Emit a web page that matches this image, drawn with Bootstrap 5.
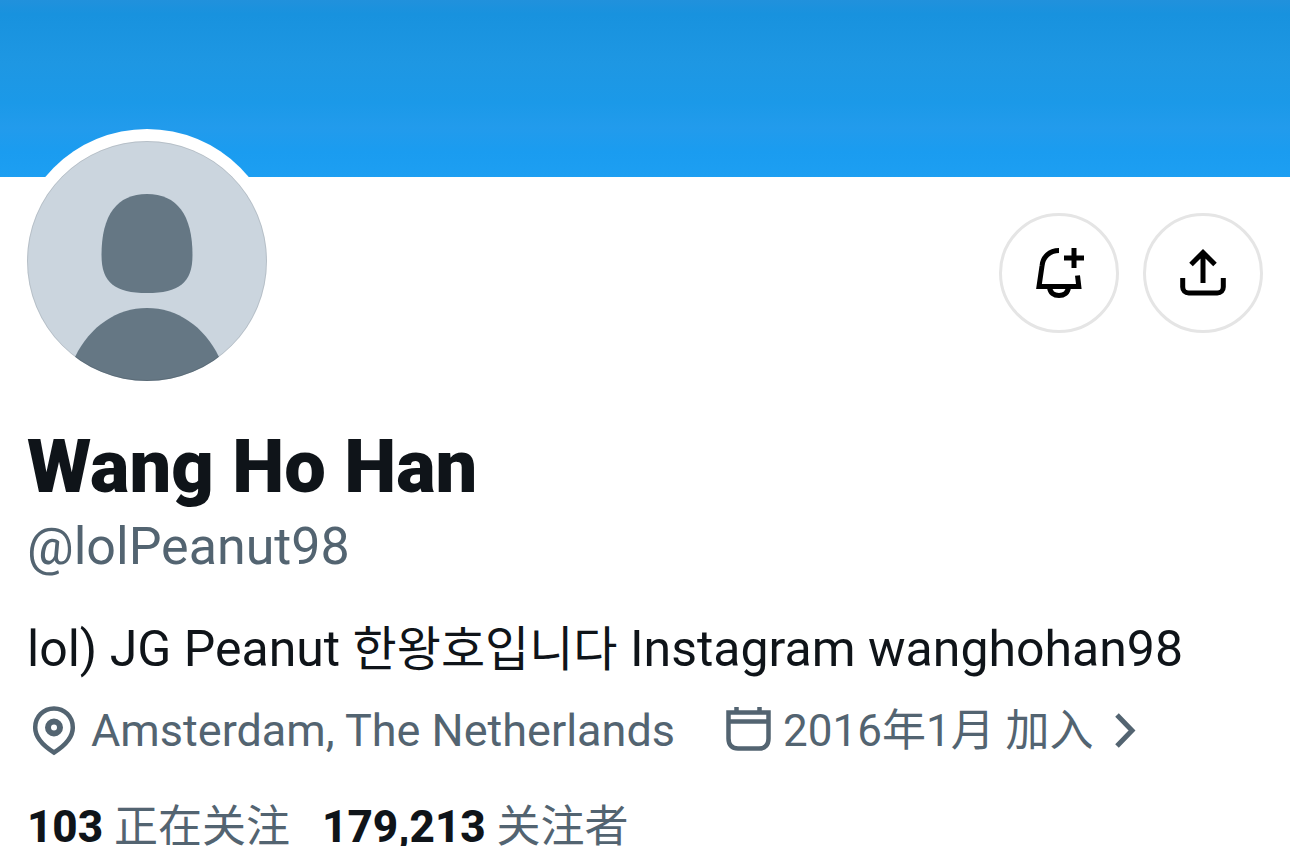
<!DOCTYPE html>
<html lang="zh-CN">
<head>
<meta charset="utf-8">
<meta name="viewport" content="width=device-width, initial-scale=1">
<title>Wang Ho Han (@lolPeanut98)</title>
<link href="https://cdn.jsdelivr.net/npm/bootstrap@5.3.0/dist/css/bootstrap.min.css" rel="stylesheet">
<style>
  :root { --ink: #0f1419; --muted: #536471; --gutter: 27px; }
  body { font-family: Roboto, "Noto Sans CJK SC", sans-serif; color: var(--ink); background: #fff; }
  a { color: inherit; text-decoration: none; }
  .banner { height: 177px; background: linear-gradient(#2191dc 0, #1892de 8%, #1e97e3 36%, #1b99e8 58%, #229bec 72%, #1a9cf0 86%, #1d9ff2 100%); }
  .profile { padding: 0 var(--gutter); }
  .avatar { width: 264px; height: 264px; margin: -48px 0 0 -12px; padding: 12px; background: #fff; }
  .actions { gap: 24px; padding-top: 36px; }
  .round-btn { width: 120px; height: 120px; border: 3px solid #e5e5e5; color: #000; }
  .display-name { font-size: 74px; line-height: 80px; font-weight: 900; margin: 34px 0 0; }
  .handle { font-size: 52px; line-height: 60px; margin: 10px 0 0; color: var(--muted); }
  .bio { font-size: 50px; line-height: 64px; margin: 40px 0 0; }
  .bio [lang=ko] { font-size: 48px; font-family: "Noto Sans CJK KR", sans-serif; line-height: 1; }
  .meta { font-size: 45px; line-height: 60px; margin-top: 20px; column-gap: 48px; color: var(--muted); }
  .meta a { font-size: 44px; }
  .meta svg { flex: none; }
  .stats { font-size: 44px; line-height: 38px; margin-top: 47px; gap: 12px 32px; color: var(--muted); }
  .stats strong { color: var(--ink); font-weight: 800; }
</style>
</head>
<body>
<header class="banner"></header>
<main class="profile">
  <div class="d-flex justify-content-between align-items-start">
    <div class="avatar rounded-circle position-relative">
      <svg class="d-block" width="240" height="240" viewBox="0 0 240 240" role="img" aria-label="Avatar">
        <defs><clipPath id="disc"><circle cx="120" cy="120" r="120"/></clipPath></defs>
        <g clip-path="url(#disc)">
          <rect width="240" height="240" fill="#cbd5de"/>
          <path fill="#657784" d="M120 53C150 53 165.500 74 165.500 114C165.500 142 152 152 120 152C88 152 74.500 142 74.500 114C74.500 74 90 53 120 53Z"/>
          <path fill="#657784" d="M48 216C63 185 90 167 120 167C150 167 177 185 192 216V240H48Z"/>
        </g>
        <circle cx="120" cy="120" r="119.500" fill="none" stroke="#000" stroke-opacity=".1"/>
      </svg>
    </div>
    <div class="actions d-flex">
      <button type="button" class="round-btn btn bg-white rounded-circle p-0 d-flex align-items-center justify-content-center" aria-label="通知">
        <svg width="60" height="60" viewBox="0 0 60 60" fill="none" stroke="currentColor" stroke-width="5">
          <path d="M30 7.500C20.500 7.500 13.700 14 13 23L10 43.500H49.800L48.500 32.500"/>
          <path d="M20.500 44C21 50 25 52.500 30 52.500S39 50 39.500 44"/>
          <path d="M45 5V25M35 15H55"/>
        </svg>
      </button>
      <button type="button" class="round-btn btn bg-white rounded-circle p-0 d-flex align-items-center justify-content-center" aria-label="分享">
        <svg width="60" height="60" viewBox="0 0 60 60" fill="none" stroke="currentColor" stroke-width="5">
          <path d="M30 40V9M18 21.500L30 9.500L42 21.500"/>
          <path d="M9.700 35V44C9.700 47.500 12.200 50 15.700 50H44.300C47.800 50 50.300 47.500 50.300 44V35"/>
        </svg>
      </button>
    </div>
  </div>
  <h1 class="display-name">Wang Ho Han</h1>
  <p class="handle">@lolPeanut98</p>
  <p class="bio">lol) JG Peanut <span lang="ko">한왕호입니다</span> Instagram wanghohan98</p>
  <div class="meta d-flex flex-wrap">
    <span class="d-flex align-items-center">
      <svg class="me-2" width="56" height="56" viewBox="0 0 56 56" fill="none" stroke="currentColor" stroke-width="4.500">
        <path d="M27 5.500C16.500 5.500 8.200 13.500 8.200 24.500C8.200 34 15 42 27 49.500C39 42 45.800 34 45.800 24.500C45.800 13.500 37.500 5.500 27 5.500Z"/>
        <circle cx="27" cy="24.500" r="6" stroke-width="6"/>
      </svg>
      <span>Amsterdam, The Netherlands</span>
    </span>
    <a href="#" class="d-flex align-items-center">
      <svg class="me-2" width="52" height="56" viewBox="0 0 52 56" fill="none" stroke="currentColor" stroke-width="4.500">
        <path d="M5.500 9.500H45.500V35.500C45.500 42 42 45.500 36 45.500H15C9 45.500 5.500 42 5.500 35.500Z"/>
        <path d="M5.500 18.500H45.500M13.500 4V10M36.500 4V10"/>
      </svg>
      <span>2016年1月 加入</span>
      <svg class="ms-3" width="32" height="56" viewBox="0 0 32 56" fill="none" stroke="currentColor" stroke-width="5">
        <path d="M7 12L22 27.500L7 43"/>
      </svg>
    </a>
  </div>
  <div class="stats d-flex flex-wrap">
    <a href="#"><strong>103</strong> 正在关注</a>
    <a href="#"><strong>179,213</strong> 关注者</a>
  </div>
</main>
<script src="https://cdn.jsdelivr.net/npm/bootstrap@5.3.0/dist/js/bootstrap.bundle.min.js"></script>
</body>
</html>
